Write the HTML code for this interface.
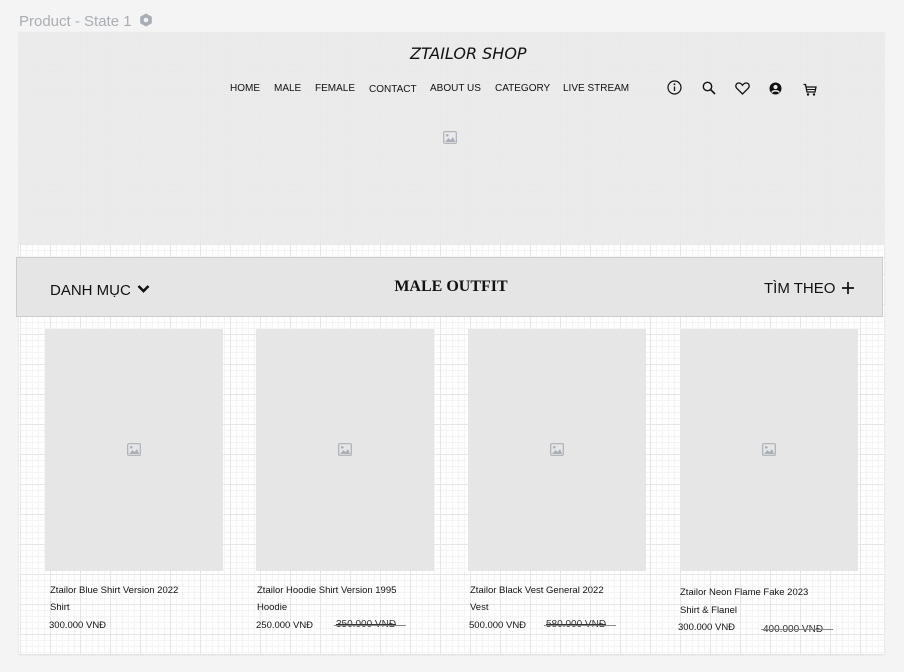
<!DOCTYPE html>
<html><head><meta charset="utf-8"><style>
*{margin:0;padding:0;box-sizing:border-box}
body{width:904px;height:672px;background:#f4f4f4;font-family:"Liberation Sans",Arial,sans-serif;position:relative;overflow:hidden}
.abs{position:absolute}
.title{left:19px;top:13px;font-size:15px;color:#a9adb4}
.canvas{left:19px;top:32px;width:865px;height:622px;background-color:#fff;
background-image:linear-gradient(90deg,#e6e6e6 1px,transparent 1px),linear-gradient(#e6e6e6 1px,transparent 1px),linear-gradient(90deg,#f4f4f4 1px,transparent 1px),linear-gradient(#f4f4f4 1px,transparent 1px);
background-size:30px 30px,30px 30px,6px 6px,6px 6px;background-position:1px 0,0 2px,1px 0,0 2px;box-shadow:0 1px 2px rgba(0,0,0,.1)}
.header{left:19px;top:32px;width:865px;height:213px;background:rgba(233,233,233,.9)}
.logo{left:410px;top:44px;font-family:"DejaVu Sans",sans-serif;font-style:italic;font-size:16px;letter-spacing:0;color:#111}
.nav{top:83px;font-size:10px;color:#111}
.bar{left:16px;top:257px;width:867px;height:60px;background:#e5e5e5;border:1px solid #ccc}
.card{width:178px;height:242px;top:329px;background:#e6e6e6}
.t{font-size:9.5px;color:#111}
.strike{text-decoration:line-through}
.ic{position:absolute}
</style></head><body>
<div class="abs title">Product - State 1 <svg width="14" height="14" viewBox="0 0 14 14" style="vertical-align:-1px;margin-left:3px"><polygon points="7,0.5 12.8,3.8 12.8,10.2 7,13.5 1.2,10.2 1.2,3.8" fill="#a9adb4"/><circle cx="7" cy="7" r="2.3" fill="#f4f4f4"/></svg></div>
<div class="abs canvas"></div>
<div class="abs header"></div>
<div class="abs logo">ZTAILOR SHOP</div>
<div class="abs nav" style="left:230px">HOME</div>
<div class="abs nav" style="left:274px">MALE</div>
<div class="abs nav" style="left:315px">FEMALE</div>
<div class="abs nav" style="left:369px;top:84px">CONTACT</div>
<div class="abs nav" style="left:430px">ABOUT US</div>
<div class="abs nav" style="left:495px">CATEGORY</div>
<div class="abs nav" style="left:563px">LIVE STREAM</div>
<svg class="ic" style="left:667px;top:80px" width="15" height="15" viewBox="0 0 15 15"><circle cx="7.5" cy="7.5" r="6.5" fill="none" stroke="#111" stroke-width="1.2"/><line x1="7.5" y1="6.5" x2="7.5" y2="11" stroke="#111" stroke-width="1.3"/><circle cx="7.5" cy="4.3" r="0.9" fill="#111"/></svg>
<svg class="ic" style="left:702px;top:81px" width="14" height="14" viewBox="0 0 14 14"><circle cx="5.5" cy="5.5" r="4.2" fill="none" stroke="#111" stroke-width="1.4"/><line x1="8.6" y1="8.6" x2="13" y2="13" stroke="#111" stroke-width="1.6"/></svg>
<svg class="ic" style="left:735px;top:82px" width="15" height="13" viewBox="0 0 15 13"><path d="M7.5 12 L1.8 6.3 C0 4.5 0.8 1 3.8 1 C5.6 1 6.8 2.3 7.5 3.3 C8.2 2.3 9.4 1 11.2 1 C14.2 1 15 4.5 13.2 6.3 Z" fill="none" stroke="#111" stroke-width="1.3"/></svg>
<svg class="ic" style="left:769px;top:82px" width="13" height="13" viewBox="0 0 13 13"><circle cx="6.5" cy="6.5" r="6" fill="#111"/><circle cx="6.5" cy="5" r="2.1" fill="#ebebeb"/><path d="M2.8 10.5 C4 8.2 9 8.2 10.2 10.5" fill="none" stroke="#ebebeb" stroke-width="1.5"/></svg>
<svg class="ic" style="left:803px;top:83px" width="14" height="14" viewBox="0 0 14 14"><path d="M0.5 1.5 H2.5 L4 9 H12 L13 4 H3" fill="none" stroke="#111" stroke-width="1.3"/><line x1="4" y1="6.5" x2="12.5" y2="6.5" stroke="#111" stroke-width="1"/><circle cx="5" cy="11.5" r="1.2" fill="#111"/><circle cx="11" cy="11.5" r="1.2" fill="#111"/></svg>
<svg class="ic" style="left:443px;top:131px" width="14" height="13" viewBox="0 0 14 13"><rect x="0.7" y="0.7" width="12.6" height="11.6" rx="1" fill="none" stroke="#aab0b8" stroke-width="1.2"/><circle cx="4.3" cy="4.3" r="1.3" fill="#aab0b8"/><path d="M2 11 L5.5 7 L7.5 9 L10 6 L12.3 11 Z" fill="#aab0b8"/></svg>
<div class="abs bar"></div>
<div class="abs" style="left:50px;top:282px;font-size:15px;color:#111">DANH MỤC</div>
<svg class="ic" style="left:137px;top:284px" width="13" height="10" viewBox="0 0 13 10"><path d="M1.5 2 L6.5 7 L11.5 2" fill="none" stroke="#111" stroke-width="2.6"/></svg>
<div class="abs" style="left:0;width:902px;top:278px;text-align:center;font-family:'Liberation Serif',serif;font-weight:bold;font-size:16px;color:#111">MALE OUTFIT</div>
<div class="abs" style="left:764px;top:280px;font-size:15px;color:#111">TÌM THEO</div>
<svg class="ic" style="left:841px;top:281px" width="14" height="14" viewBox="0 0 14 14"><path d="M7 1 V13 M1 7 H13" stroke="#111" stroke-width="1.7"/></svg>

<div class="abs card" style="left:45px"></div>
<div class="abs card" style="left:256px"></div>
<div class="abs card" style="left:468px"></div>
<div class="abs card" style="left:680px"></div>
<svg class="ic" style="left:127px;top:443px" width="14" height="13" viewBox="0 0 14 13"><rect x="0.7" y="0.7" width="12.6" height="11.6" rx="1" fill="none" stroke="#aab0b8" stroke-width="1.2"/><circle cx="4.3" cy="4.3" r="1.3" fill="#aab0b8"/><path d="M2 11 L5.5 7 L7.5 9 L10 6 L12.3 11 Z" fill="#aab0b8"/></svg>
<svg class="ic" style="left:338px;top:443px" width="14" height="13" viewBox="0 0 14 13"><rect x="0.7" y="0.7" width="12.6" height="11.6" rx="1" fill="none" stroke="#aab0b8" stroke-width="1.2"/><circle cx="4.3" cy="4.3" r="1.3" fill="#aab0b8"/><path d="M2 11 L5.5 7 L7.5 9 L10 6 L12.3 11 Z" fill="#aab0b8"/></svg>
<svg class="ic" style="left:550px;top:443px" width="14" height="13" viewBox="0 0 14 13"><rect x="0.7" y="0.7" width="12.6" height="11.6" rx="1" fill="none" stroke="#aab0b8" stroke-width="1.2"/><circle cx="4.3" cy="4.3" r="1.3" fill="#aab0b8"/><path d="M2 11 L5.5 7 L7.5 9 L10 6 L12.3 11 Z" fill="#aab0b8"/></svg>
<svg class="ic" style="left:762px;top:443px" width="14" height="13" viewBox="0 0 14 13"><rect x="0.7" y="0.7" width="12.6" height="11.6" rx="1" fill="none" stroke="#aab0b8" stroke-width="1.2"/><circle cx="4.3" cy="4.3" r="1.3" fill="#aab0b8"/><path d="M2 11 L5.5 7 L7.5 9 L10 6 L12.3 11 Z" fill="#aab0b8"/></svg>

<div class="abs t" style="left:50px;top:585px">Ztailor Blue Shirt Version 2022</div>
<div class="abs t" style="left:50px;top:602px">Shirt</div>
<div class="abs t" style="left:49px;top:620px">300.000 VNĐ</div>

<div class="abs t" style="left:257px;top:585px">Ztailor Hoodie Shirt Version 1995</div>
<div class="abs t" style="left:257px;top:602px">Hoodie</div>
<div class="abs t" style="left:256px;top:620px">250.000 VNĐ</div>
<div class="abs t strike" style="left:336px;top:619px;color:#333;font-size:10px">350.000 VNĐ</div>
<div class="abs" style="left:334px;top:625px;width:72px;height:1px;background:#888"></div>

<div class="abs t" style="left:470px;top:585px">Ztailor Black Vest General 2022</div>
<div class="abs t" style="left:470px;top:602px">Vest</div>
<div class="abs t" style="left:469px;top:620px">500.000 VNĐ</div>
<div class="abs t strike" style="left:546px;top:619px;color:#333;font-size:10px">580.000 VNĐ</div>
<div class="abs" style="left:544px;top:625px;width:72px;height:1px;background:#888"></div>

<div class="abs t" style="left:680px;top:587px">Ztailor Neon Flame Fake 2023</div>
<div class="abs t" style="left:680px;top:605px">Shirt &amp; Flanel</div>
<div class="abs t" style="left:678px;top:622px">300.000 VNĐ</div>
<div class="abs t strike" style="left:763px;top:624px;color:#333;font-size:10px">400.000 VNĐ</div>
<div class="abs" style="left:761px;top:629px;width:72px;height:1px;background:#888"></div>
</body></html>
